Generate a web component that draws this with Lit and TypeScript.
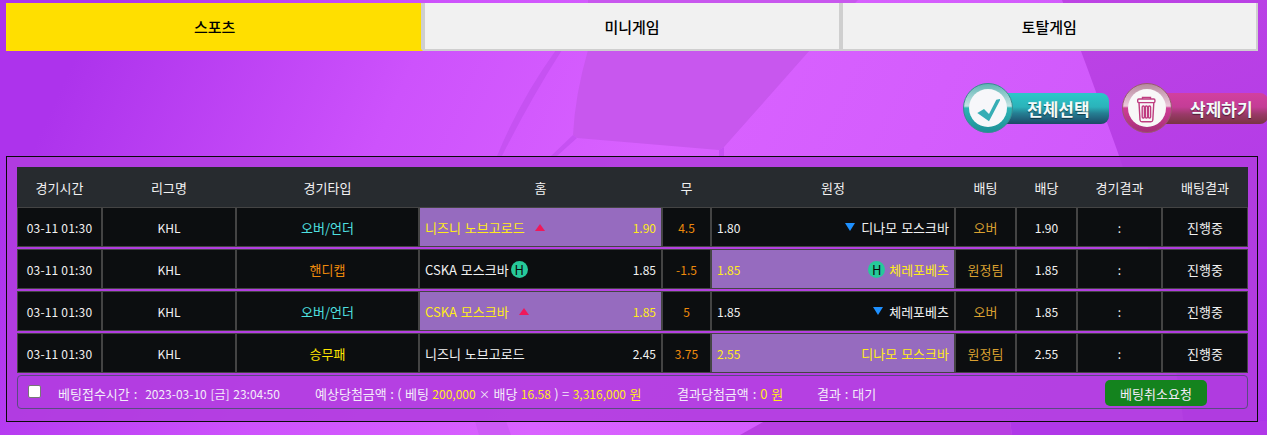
import { LitElement, html, css, svg } from "lit";
import { customElement } from "lit/decorators.js";

type Side = { name: string; odds: string; on?: boolean; tri?: boolean; h?: boolean };
type Row = { type: string; typeCls: string; home: Side; draw: string; away: Side; bet: string; odds: string };

const rows: Row[] = [
  { type: "오버/언더", typeCls: "cyan", home: { name: "니즈니 노브고로드", odds: "1.90", on: true, tri: true }, draw: "4.5", away: { name: "디나모 모스크바", odds: "1.80", tri: true }, bet: "오버", odds: "1.90" },
  { type: "핸디캡", typeCls: "orange", home: { name: "CSKA 모스크바", odds: "1.85", h: true }, draw: "-1.5", away: { name: "체레포베츠", odds: "1.85", on: true, h: true }, bet: "원정팀", odds: "1.85" },
  { type: "오버/언더", typeCls: "cyan", home: { name: "CSKA 모스크바", odds: "1.85", on: true, tri: true }, draw: "5", away: { name: "체레포베츠", odds: "1.85", tri: true }, bet: "오버", odds: "1.85" },
  { type: "승무패", typeCls: "yellow", home: { name: "니즈니 노브고로드", odds: "2.45" }, draw: "3.75", away: { name: "디나모 모스크바", odds: "2.55", on: true }, bet: "원정팀", odds: "2.55" },
];

const heads = ["경기시간", "리그명", "경기타입", "홈", "무", "원정", "배팅", "배당", "경기결과", "배팅결과"];

const bg = svg`<svg class="bg" width="1267" height="435" viewBox="0 0 1267 435" aria-hidden="true">
  <defs>
    <linearGradient id="base" gradientUnits="userSpaceOnUse" x1="60" y1="90" x2="1000" y2="520">
      <stop offset="0" stop-color="#ad33ec"/>
      <stop offset=".3" stop-color="#cd52fc"/>
      <stop offset=".55" stop-color="#d962ff"/>
      <stop offset="1" stop-color="#cf58fb"/>
    </linearGradient>
    <linearGradient id="outer" gradientUnits="userSpaceOnUse" x1="1060" y1="0" x2="1267" y2="435">
      <stop offset="0" stop-color="#bd44e4"/>
      <stop offset="1" stop-color="#ac34ea"/>
    </linearGradient>
  </defs>
  <rect width="1267" height="435" fill="url(#base)"/>
  <path d="M1062 0 L1088 70 L1117 150 Q1170 300 1185 435 L1267 435 L1267 0 Z" fill="url(#outer)"/>
  <path d="M588 0 L588 50 Q575 95 573 135 L577 138 L719 150 L724 147 L810 50 L858 0 Z" fill="#c857ee"/>
  <path d="M556 50 Q520 100 497 156 L502 156 Q530 100 562 50 Z" fill="#c652f2"/>
  <path d="M573 135 L551 156 L557 156 L577 138 Z" fill="#c652f2"/>
  <path d="M719 150 L719 156 L724 156 L724 147 Z" fill="#c652f2"/>
  <path d="M475 421 L479 435 L511 435 L506 421 Z" fill="#cd5bf6"/>
  <path d="M765 421 L740 435 L1012 435 L1010 421 Z" fill="#b83fe2"/>
  <path d="M1010 421 L1012 435 L1267 435 L1267 421 Z" fill="#b038e8"/>
</svg>`;

const checkIcon = svg`<svg class="badge" width="50" height="50" viewBox="0 0 50 50" aria-hidden="true">
  <defs>
    <linearGradient id="ct" x1="0" y1="0" x2="0" y2="1"><stop offset="0" stop-color="#5fb4b4"/><stop offset=".46" stop-color="#c4e4e4"/><stop offset=".5" stop-color="#2eb4b6"/><stop offset="1" stop-color="#1d8f96"/></linearGradient>
  </defs>
  <circle cx="25" cy="25" r="24.5" fill="url(#ct)" stroke="#3a8c90" stroke-width="1"/>
  <circle cx="25" cy="25" r="19" fill="#f7f7fa"/>
  <path d="M14.3 30 L21 26 L26 31 L33.3 16.7 L37 16 L37 17.3 L26 38.3 Z" fill="#36aeb5"/>
</svg>`;

const trashIcon = svg`<svg class="badge" width="50" height="50" viewBox="0 0 50 50" aria-hidden="true">
  <defs>
    <linearGradient id="dt" x1="0" y1="0" x2="0" y2="1"><stop offset="0" stop-color="#b58a9c"/><stop offset=".46" stop-color="#ecc8dc"/><stop offset=".5" stop-color="#cf3d96"/><stop offset="1" stop-color="#a52e78"/></linearGradient>
  </defs>
  <circle cx="25" cy="25" r="24.5" fill="url(#dt)" stroke="#9a5a70" stroke-width="1"/>
  <circle cx="25" cy="25" r="19" fill="#f8f8f8"/>
  <g fill="none" stroke="#bf3d80" stroke-width="1.4">
    <path d="M20.5 16 V14.5 H28.5 V16"/>
    <rect x="15.7" y="16" width="17.2" height="3.6" rx="1"/>
    <path d="M17 19.6 L18 37 Q18.2 38.8 20 38.8 H28.8 Q30.6 38.8 30.8 37 L31.8 19.6"/>
    <rect x="20.2" y="23" width="2.2" height="12" rx="1"/>
    <rect x="23.3" y="23" width="2.2" height="12" rx="1"/>
    <rect x="26.4" y="23" width="2.2" height="12" rx="1"/>
  </g>
</svg>`;

@customElement("app-root")
export class AppRoot extends LitElement {
  static styles = css`
    :host {
      display: block;
      position: relative;
      width: 1267px;
      height: 435px;
      overflow: hidden;
      font-family: "Noto Sans CJK KR", "Noto Sans", sans-serif;
      font-size: 13px;
      color: #fff;
    }
    .bg { position: absolute; left: 0; top: 0; }
    .page { position: relative; padding: 3px 9px 0 6px; }
    .tabs { display: flex; height: 48px; }
    .tab {
      flex: 1;
      display: flex;
      align-items: center;
      justify-content: center;
      box-sizing: border-box;
      background: #f1f1f1;
      border: 2px solid #cfcfcf;
      border-top: 0;
      color: #000;
      font-size: 15px;
      font-weight: 500;
    }
    .tab.on { background: #ffdf00; border-color: #ffdf00 #cfcfcf #ffdf00 #ffdf00; }
    .tools { display: flex; justify-content: flex-end; gap: 13px; height: 50px; margin: 32px -10px 0 0; }
    .btn { display: flex; align-items: center; width: 146px; height: 50px; flex: none; }
    .badge { flex: none; position: relative; z-index: 1; }
    .pill {
      flex: 1;
      height: 31px;
      margin-left: -8px;
      display: flex;
      align-items: center;
      border-radius: 0 8px 8px 0;
      font-size: 17px;
      font-weight: 700;
      color: #f4fbfb;
      text-shadow: 0 1px 1px rgba(0, 0, 0, .55);
    }
    .pill.teal { padding-left: 22px; background: linear-gradient(#2cc7c9 0, #2bb3ba 45%, #257f93 65%, #1d4867 100%); }
    .pill.rose { padding-left: 26px; background: linear-gradient(#d2409f 0, #c43d96 45%, #9a3a68 68%, #783443 100%); }
    .box {
      margin-top: 23px;
      height: 266px;
      box-sizing: border-box;
      border: 1px solid #0a0a0a;
      padding: 10px 10px 0 10px;
      background: rgba(176, 60, 222, .88);
    }
    .grid {
      display: grid;
      grid-template-columns: 85px 134px 183px 243px 49px 244px 61px 61px 85px 86px;
      width: 1231px;
    }
    .head { height: 40px; background: #272b2f; align-items: center; text-align: center; color: #f2f2f2; }
    .row { height: 40px; margin-bottom: 2px; }
    .cell {
      box-sizing: border-box;
      border: 1px solid #444;
      background: #0c0e10;
      display: flex;
      align-items: center;
      justify-content: center;
      white-space: nowrap;
      color: #f2f2f2;
      min-width: 0;
    }
    .num { font-size: 12px; }
    .time { font-size: 12px; letter-spacing: .2px; }
    .side { justify-content: space-between; padding: 0 5px; }
    .side.on { background: #966bbf; color: #ffec1a; }
    .name { display: flex; align-items: center; word-spacing: 1px; }
    .cyan { color: #4fe0e0; }
    .orange { color: #ee8a0c; }
    .yellow { color: #ffe600; }
    .gold { color: #d9a030; }
    .tri-up { width: 0; height: 0; margin-left: 10px; border: 5px solid transparent; border-top: 0; border-bottom: 7px solid #f0185a; }
    .tri-down { width: 0; height: 0; margin-right: 6px; border: 5px solid transparent; border-bottom: 0; border-top: 8px solid #1e90ff; }
    .h {
      width: 17px;
      height: 17px;
      border-radius: 50%;
      background: #26c99a;
      color: #0a0a0a;
      font-size: 13px;
      line-height: 17px;
      text-align: center;
    }
    .home .h { margin-left: 2px; }
    .away .h { margin-right: 4px; }
    .foot {
      height: 34px;
      margin-top: 2px;
      width: 1231px;
      box-sizing: border-box;
      border: 1px solid #5b4a82;
      border-radius: 4px;
      padding-top: 2px;
      display: flex;
      align-items: center;
      color: #f4ecfa;
      word-spacing: 1px;
    }
    .foot input { margin: 0 0 4px 10px; width: 13px; height: 13px; flex: none; appearance: none; background: #fff; border: 1px solid #777; border-radius: 2px; }
    .f1, .f2, .f3, .f4 { flex: none; white-space: nowrap; }
    .f1 { margin-left: 17px; width: 257px; }
    .f2 { width: 362px; word-spacing: .5px; }
    .f3 { width: 140px; }
    .f4 { width: 288px; }
    .hl { color: #ffec1a; }
    .x { font-size: 11px; }
    .cancel {
      flex: none;
      width: 102px;
      height: 26px;
      background: #14831e;
      border-radius: 5px;
      display: flex;
      align-items: center;
      justify-content: center;
    }
  `;

  private renderSide(s: Side, kind: "home" | "away") {
    if (kind === "home") {
      return html`<div class="cell side home ${s.on ? "on" : ""}">
        <span class="name">${s.name}${s.tri ? html`<i class="tri-up"></i>` : ""}${s.h ? html`<span class="h">H</span>` : ""}</span>
        <span class="num">${s.odds}</span>
      </div>`;
    }
    return html`<div class="cell side away ${s.on ? "on" : ""}">
      <span class="num">${s.odds}</span>
      <span class="name">${s.tri ? html`<i class="tri-down"></i>` : ""}${s.h ? html`<span class="h">H</span>` : ""}${s.name}</span>
    </div>`;
  }

  render() {
    return html`
      ${bg}
      <div class="page">
        <div class="tabs">
          <div class="tab on">스포츠</div>
          <div class="tab">미니게임</div>
          <div class="tab">토탈게임</div>
        </div>
        <div class="tools">
          <div class="btn">${checkIcon}<div class="pill teal">전체선택</div></div>
          <div class="btn">${trashIcon}<div class="pill rose">삭제하기</div></div>
        </div>
        <div class="box">
          <div class="grid head">${heads.map((h) => html`<div>${h}</div>`)}</div>
          ${rows.map(
            (r) => html`<div class="grid row">
              <div class="cell time">03-11 01:30</div>
              <div class="cell num">KHL</div>
              <div class="cell ${r.typeCls}">${r.type}</div>
              ${this.renderSide(r.home, "home")}
              <div class="cell orange num">${r.draw}</div>
              ${this.renderSide(r.away, "away")}
              <div class="cell gold">${r.bet}</div>
              <div class="cell num">${r.odds}</div>
              <div class="cell num">:</div>
              <div class="cell">진행중</div>
            </div>`
          )}
          <div class="foot">
            <input type="checkbox" />
            <span class="f1">베팅접수시간 :&nbsp; <span class="num">2023-03-10 [금] 23:04:50</span></span>
            <span class="f2">예상당첨금액 : ( 베팅 <span class="hl num">200,000</span> <span class="x">×</span> 배당 <span class="hl num">16.58</span> ) = <span class="hl num">3,316,000</span> <span class="hl">원</span></span>
            <span class="f3">결과당첨금액 : <span class="hl">0 원</span></span>
            <span class="f4">결과 : 대기</span>
            <div class="cancel">베팅취소요청</div>
          </div>
        </div>
      </div>
    `;
  }
}
